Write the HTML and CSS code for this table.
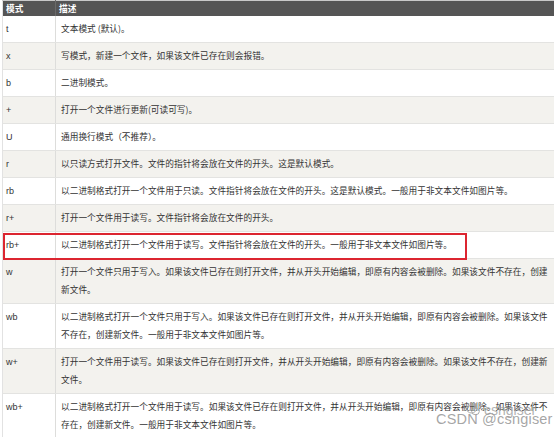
FILE: index.html
```html
<!DOCTYPE html>
<html lang="zh">
<head>
<meta charset="utf-8">
<link rel="stylesheet" href="styles.css">
</head>
<body>
<div class="wrap">
<table class="modes">
<thead>
<tr><th class="c1">模式</th><th>描述</th></tr>
</thead>
<tbody>
<tr><td class="c1">t</td><td>文本模式 (默认)。</td></tr>
<tr><td class="c1">x</td><td>写模式，新建一个文件，如果该文件已存在则会报错。</td></tr>
<tr><td class="c1">b</td><td>二进制模式。</td></tr>
<tr><td class="c1">+</td><td>打开一个文件进行更新(可读可写)。</td></tr>
<tr><td class="c1">U</td><td>通用换行模式（不推荐）。</td></tr>
<tr><td class="c1">r</td><td>以只读方式打开文件。文件的指针将会放在文件的开头。这是默认模式。</td></tr>
<tr><td class="c1">rb</td><td>以二进制格式打开一个文件用于只读。文件指针将会放在文件的开头。这是默认模式。一般用于非文本文件如图片等。</td></tr>
<tr><td class="c1">r+</td><td>打开一个文件用于读写。文件指针将会放在文件的开头。</td></tr>
<tr class="hl"><td class="c1">rb+</td><td>以二进制格式打开一个文件用于读写。文件指针将会放在文件的开头。一般用于非文本文件如图片等。</td></tr>
<tr><td class="c1">w</td><td>打开一个文件只用于写入。如果该文件已存在则打开文件，并从开头开始编辑，即原有内容会被删除。如果该文件不存在，创建新文件。</td></tr>
<tr><td class="c1">wb</td><td>以二进制格式打开一个文件只用于写入。如果该文件已存在则打开文件，并从开头开始编辑，即原有内容会被删除。如果该文件不存在，创建新文件。一般用于非文本文件如图片等。</td></tr>
<tr><td class="c1">w+</td><td>打开一个文件用于读写。如果该文件已存在则打开文件，并从开头开始编辑，即原有内容会被删除。如果该文件不存在，创建新文件。</td></tr>
<tr><td class="c1">wb+</td><td>以二进制格式打开一个文件用于读写。如果该文件已存在则打开文件，并从开头开始编辑，即原有内容会被删除。如果该文件不存在，创建新文件。一般用于非文本文件如图片等。</td></tr>
</tbody>
</table>
<div class="redbox"></div>
<div class="wm2"><svg class="wmicon" width="14" height="12" viewBox="0 0 14 12"><ellipse cx="5.5" cy="5" rx="4.8" ry="4" fill="none" stroke="#aaa" stroke-width="1"/><ellipse cx="9.5" cy="7.5" rx="3.8" ry="3.2" fill="none" stroke="#aaa" stroke-width="1"/></svg><span>csngiser</span></div>
<div class="wm1">CSDN @csngiser</div>
</div>
</body>
</html>
```
FILE: styles.css
```css
html, body {
  margin: 0;
  padding: 0;
  background: #ffffff;
}
.wrap {
  position: relative;
  width: 554px;
  height: 437px;
  overflow: hidden;
}
.modes {
  margin-left: 2px;
  width: 552px;
  border-collapse: collapse;
  font-family: "Noto Sans CJK SC", "Liberation Sans", sans-serif;
  font-size: 8.7px;
  color: #333333;
  border-top: 1px solid #c9c9c9;
  border-left: 1px solid #e2e2e2;
}
.modes th {
  background: #555555;
  color: #ffffff;
  font-weight: bold;
  text-align: left;
  height: 15px;
  padding: 0 3px;
  line-height: 15px;
  border-left: 1px solid #6a6a6a;
}
.modes th.c1 {
  border-left: none;
}
.modes td {
  padding: 4px 6px 4px 5px;
  line-height: 18px;
  vertical-align: top;
  border-bottom: 1px solid #e3e3e1;
  border-left: 1px solid #dddddb;
}
.modes td.c1 {
  width: 44px;
  padding-left: 3px;
  padding-right: 5px;
  border-left: none;
  font-family: "Liberation Sans", sans-serif;
  font-size: 9px;
}
.modes tbody tr:nth-child(even) td {
  background: #f3f2ee;
}
.redbox {
  position: absolute;
  left: 3px;
  top: 233px;
  width: 460px;
  height: 23px;
  border: 2px solid #dc2530;
}
.wm1 {
  position: absolute;
  left: 436px;
  top: 411px;
  font-family: "Liberation Sans", sans-serif;
  font-size: 14.5px;
  color: rgba(150, 150, 150, 0.85);
  letter-spacing: 0.2px;
}
.wm2 {
  position: absolute;
  left: 466px;
  top: 402px;
  display: flex;
  align-items: center;
  gap: 4px;
  font-family: "Liberation Sans", sans-serif;
  font-size: 14px;
  color: rgba(160, 160, 160, 0.8);
}
```
